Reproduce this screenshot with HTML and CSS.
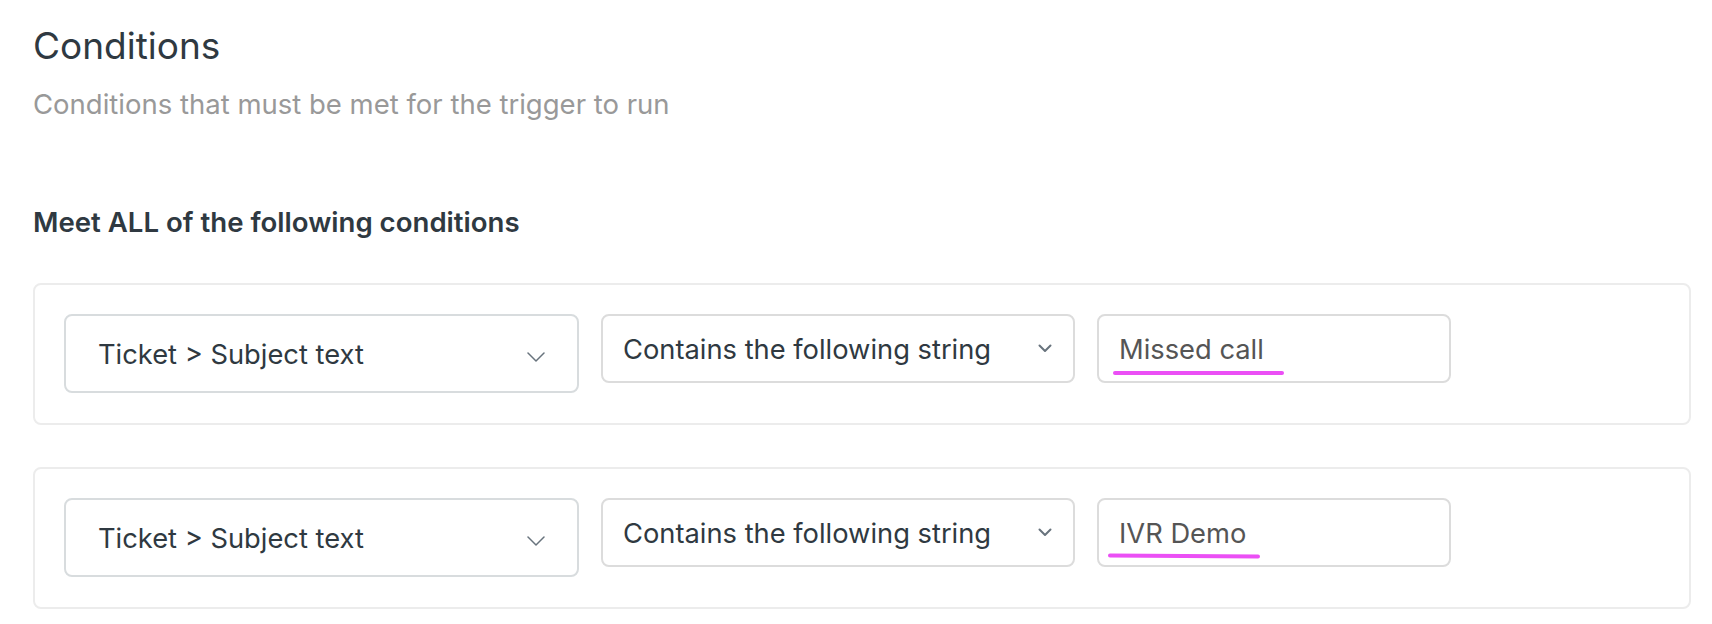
FILE: index.html
```html
<!DOCTYPE html>
<html lang="en">
<head>
<meta charset="utf-8">
<title>Conditions</title>
<link rel="stylesheet" href="styles.css">
</head>
<body>
<main class="page">
  <h1 class="title">Conditions</h1>
  <p class="subtitle">Conditions that must be met for the trigger to run</p>
  <h2 class="group-label">Meet ALL of the following conditions</h2>

  <div class="cond-card">
    <div class="field select-main">
      <span class="field-text">Ticket &gt; Subject text</span>
      <svg class="chev chev-main" width="18" height="10" viewBox="0 0 18 10"><path d="M1 1 L9 9 L17 1" fill="none" stroke="#68737d" stroke-width="1.5" stroke-linecap="round" stroke-linejoin="round"/></svg>
    </div>
    <div class="field select-op">
      <span class="field-text">Contains the following string</span>
      <svg class="chev chev-op" width="14" height="9" viewBox="0 0 14 9"><path d="M1.5 1.5 L7 7 L12.5 1.5" fill="none" stroke="#68737d" stroke-width="2" stroke-linecap="round" stroke-linejoin="round"/></svg>
    </div>
    <div class="field value-input">
      <span class="value-text">Missed call</span>
      <span class="mark mark-1"></span>
    </div>
  </div>

  <div class="cond-card">
    <div class="field select-main">
      <span class="field-text">Ticket &gt; Subject text</span>
      <svg class="chev chev-main" width="18" height="10" viewBox="0 0 18 10"><path d="M1 1 L9 9 L17 1" fill="none" stroke="#68737d" stroke-width="1.5" stroke-linecap="round" stroke-linejoin="round"/></svg>
    </div>
    <div class="field select-op">
      <span class="field-text">Contains the following string</span>
      <svg class="chev chev-op" width="14" height="9" viewBox="0 0 14 9"><path d="M1.5 1.5 L7 7 L12.5 1.5" fill="none" stroke="#68737d" stroke-width="2" stroke-linecap="round" stroke-linejoin="round"/></svg>
    </div>
    <div class="field value-input">
      <span class="value-text">IVR Demo</span>
      <span class="mark mark-2"></span>
    </div>
  </div>
</main>
</body>
</html>
```

FILE: styles.css
```css
* { box-sizing: border-box; }

html, body {
  margin: 0;
  padding: 0;
  background: #ffffff;
}

body {
  font-family: Inter, "Noto Sans", "Liberation Sans", sans-serif;
  color: #2f3941;
}

.page {
  display: flex;
  flex-direction: column;
  padding: 23px 21px 0 33px;
}

.title {
  margin: 0;
  font-size: 37px;
  line-height: 46px;
  font-weight: 400;
  color: #2f3941;
}

.subtitle {
  margin: 17px 0 0;
  font-size: 27.5px;
  line-height: 36px;
  font-weight: 400;
  color: #999999;
}

.group-label {
  margin: 83px 0 0;
  font-size: 27.6px;
  line-height: 34px;
  font-weight: 600;
  color: #2f3941;
}

.cond-card {
  display: flex;
  align-items: flex-start;
  gap: 22px;
  margin-top: 44px;
  padding: 29px 29px 30px;
  border: 2px solid #ececec;
  border-radius: 8px;
}

.cond-card + .cond-card {
  margin-top: 42px;
}

.field {
  position: relative;
  display: flex;
  align-items: center;
  border-radius: 8px;
  background: #fff;
}

.select-main {
  width: 515px;
  height: 79px;
  padding: 1px 32px 0 32px;
  border: 2px solid #d8dcde;
  justify-content: space-between;
}

.select-op {
  width: 474px;
  height: 69px;
  padding: 2px 21px 0 20px;
  border: 2px solid #dcdcdc;
  justify-content: space-between;
}

.value-input {
  width: 354px;
  height: 69px;
  padding: 2px 20px 0;
  border: 2px solid #dcdcdc;
}

.field-text {
  font-size: 27.3px;
  color: #2f3941;
  white-space: nowrap;
}

.value-text {
  font-size: 27.3px;
  color: #555555;
  white-space: nowrap;
}

.chev {
  flex: none;
  display: block;
}

.chev-main { margin-top: 6px; }
.chev-op { margin-top: -2px; }

.mark {
  position: absolute;
  height: 4px;
  background: #eb4ff5;
  border-radius: 2px;
}

.mark-1 {
  left: 14px;
  top: 55px;
  width: 171px;
}

.mark-2 {
  left: 9px;
  top: 54px;
  width: 152px;
  transform: rotate(0.4deg);
}
```
